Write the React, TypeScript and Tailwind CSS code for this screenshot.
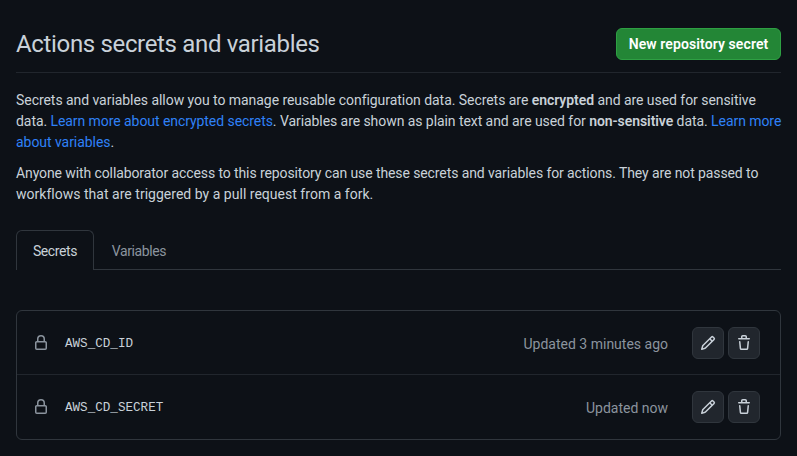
const PENCIL = "M11.013 1.427a1.75 1.75 0 0 1 2.474 0l1.086 1.086a1.75 1.75 0 0 1 0 2.474l-8.61 8.61c-.21.21-.47.364-.756.445l-3.251.93a.75.75 0 0 1-.927-.928l.929-3.25c.081-.286.235-.547.445-.758l8.61-8.61Zm.176 4.823L9.75 4.81l-6.286 6.287a.253.253 0 0 0-.064.108l-.558 1.953 1.953-.558a.253.253 0 0 0 .108-.064Zm1.238-3.763a.25.25 0 0 0-.354 0L10.811 3.75l1.439 1.44 1.263-1.263a.25.25 0 0 0 0-.354Z";
const TRASH = "M11 1.75V3h2.25a.75.75 0 0 1 0 1.5H2.75a.75.75 0 0 1 0-1.5H5V1.75C5 .784 5.784 0 6.75 0h2.5C10.216 0 11 .784 11 1.75ZM4.496 6.675l.66 6.6a.25.25 0 0 0 .249.225h5.19a.25.25 0 0 0 .249-.225l.66-6.6a.75.75 0 0 1 1.492.149l-.66 6.6A1.748 1.748 0 0 1 10.595 15h-5.19a1.75 1.75 0 0 1-1.741-1.575l-.66-6.6a.75.75 0 1 1 1.492-.15ZM6.5 1.75V3h3V1.75a.25.25 0 0 0-.25-.25h-2.5a.25.25 0 0 0-.25.25Z";
const LOCK = "M4 4a4 4 0 0 1 8 0v2h.25c.966 0 1.75.784 1.75 1.75v5.5A1.75 1.75 0 0 1 12.25 15h-8.5A1.75 1.75 0 0 1 2 13.25v-5.5C2 6.784 2.784 6 3.75 6H4Zm8.25 3.5h-8.5a.25.25 0 0 0-.25.25v5.5c0 .138.112.25.25.25h8.5a.25.25 0 0 0 .25-.25v-5.5a.25.25 0 0 0-.25-.25ZM10.5 6V4a2.5 2.5 0 1 0-5 0v2Z";

function Octicon({ d, className }: { d: string; className?: string }) {
  return (
    <svg viewBox="0 0 16 16" width="16" height="16" fill="currentColor" className={className}>
      <path d={d} />
    </svg>
  );
}

function IconBtn({ d }: { d: string }) {
  return (
    <button className="w-8 h-8 flex items-center justify-center rounded-md bg-[#21262d] border border-[#30363d] text-[#c9d1d9]">
      <Octicon d={d} />
    </button>
  );
}

function SecretRow({ name, updated, last }: { name: string; updated: string; last?: boolean }) {
  return (
    <div className={`flex items-center pl-4 pr-5 h-[64px] ${last ? "" : "pt-px border-b border-[#21262d]"}`}>
      <Octicon d={LOCK} className="text-[#8b949e] mr-4" />
      <span className="pt-[3px] text-[12.6px] text-[#c9d1d9] font-['Liberation_Mono',monospace]">{name}</span>
      <span className="ml-auto mr-6 pt-[2px] text-[#8b949e]">{updated}</span>
      <div className="flex gap-1">
        <IconBtn d={PENCIL} />
        <IconBtn d={TRASH} />
      </div>
    </div>
  );
}

export default function App() {
  return (
    <div className="w-[797px] h-[456px] overflow-hidden bg-[#0d1117] text-[#c9d1d9] text-[14px] leading-[21px] font-['Roboto',sans-serif] px-4 pt-7">
      {/* Header */}
      <div className="flex items-start justify-between h-[45px] border-b border-[#21262d]">
        <h1 className="text-[24px] leading-8 font-normal tracking-[-0.34px]">Actions secrets and variables</h1>
        <button className="h-8 w-[165px] rounded-md bg-[#238636] border border-[#2ea043] text-white font-semibold tracking-[0.1px]">New repository secret</button>
      </div>

      <p className="mt-[17px] tracking-[-0.05px] whitespace-nowrap">
        Secrets and variables allow you to manage reusable configuration data. Secrets are <b className="font-semibold">encrypted</b> and are used for sensitive<br />
        <span className="tracking-[-0.065px]">data. <a className="text-[#2f81f7]">Learn more about encrypted secrets</a>. Variables are shown as plain text and are used for <b className="font-semibold">non-sensitive</b> data. <a className="text-[#2f81f7]">Learn more</a></span><br />
        <a className="text-[#2f81f7]">about variables</a>.
      </p>
      <p className="mt-[10px] tracking-[-0.1px] whitespace-nowrap">
        Anyone with collaborator access to this repository can use these secrets and variables for actions. They are not passed to<br />
        <span className="tracking-[0.02px]">workflows that are triggered by a pull request from a fork.</span>
      </p>

      {/* Tabs */}
      <div className="flex mt-[25px] h-10 border-b border-[#30363d] tracking-[-0.4px]">
        <div className="h-10 w-[78px] flex items-center justify-center pt-px rounded-t-md border border-b-0 border-[#30363d] bg-[#0d1117]">Secrets</div>
        <div className="h-10 w-[90px] flex items-center justify-center pt-[3px] text-[#8b949e]">Variables</div>
      </div>

      <div className="mt-10 w-[765px] border border-[#30363d] rounded-md">
        <SecretRow name="AWS_CD_ID" updated="Updated 3 minutes ago" />
        <SecretRow name="AWS_CD_SECRET" updated="Updated now" last />
      </div>
    </div>
  );
}
